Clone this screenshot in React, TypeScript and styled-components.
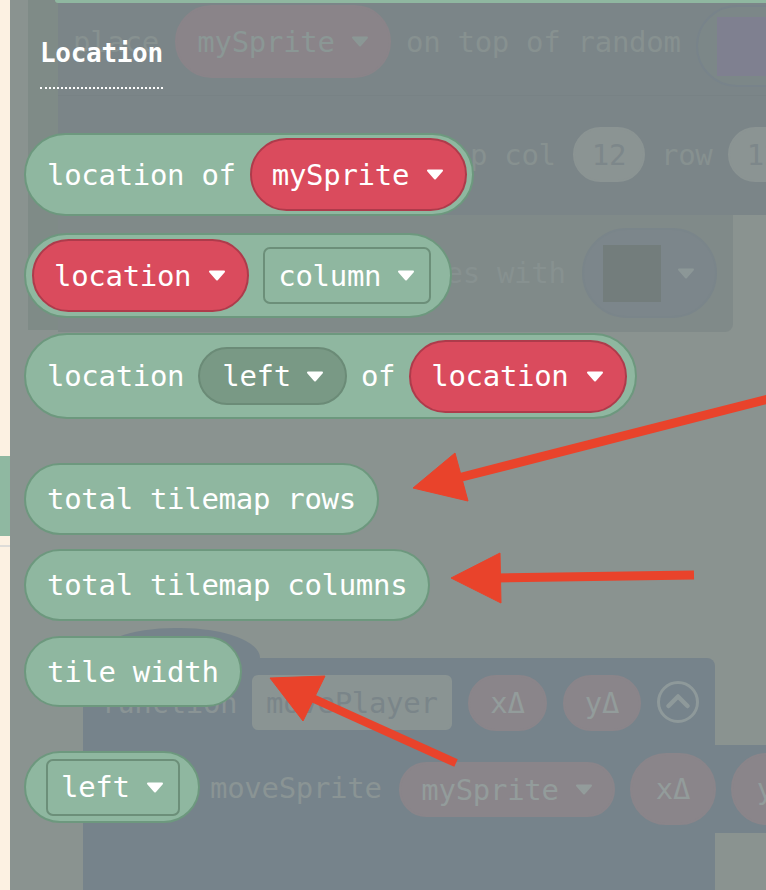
import React from 'react';
import styled, { createGlobalStyle, css } from 'styled-components';

const GlobalStyle = createGlobalStyle`
  html, body {
    margin: 0;
    padding: 0;
    background: #8a9390;
  }
  body {
    font-family: 'DejaVu Sans Mono', 'Liberation Mono', monospace;
  }
`;

const Page = styled.div`
  position: relative;
  display: flex;
  width: 766px;
  height: 890px;
  overflow: hidden;
`;

const Sidebar = styled.div`
  width: 10px;
  flex-shrink: 0;
  display: flex;
  flex-direction: column;
  padding-top: 456px;
  background: #fcf1e2;
`;

const SideTab = styled.div`
  height: 80px;
  background: #8fb8a1;
`;

const SideRule = styled.div`
  margin-top: 9px;
  height: 2px;
  background: #dedcd8;
`;

const Workspace = styled.div`
  position: relative;
  flex: 1;
  background: #8a9390;
`;

/* dimmed workspace canvas (page coordinates, workspace starts at x=10) */

type Spot = { $x: number; $y: number };
type Box = Spot & { $w: number; $h: number };

const placed = css<Box>`
  position: absolute;
  left: ${(p) => p.$x - 10}px;
  top: ${(p) => p.$y}px;
  width: ${(p) => p.$w}px;
  height: ${(p) => p.$h}px;
`;

const StackBody = styled.div<Box & { $tone?: string; $radius?: string }>`
  ${placed}
  box-sizing: border-box;
  background: ${(p) => p.$tone ?? '#7b8588'};
  border-radius: ${(p) => p.$radius ?? '0'};
`;

const GhostText = styled.span<Spot & { $ink?: string }>`
  position: absolute;
  left: ${(p) => p.$x - 10}px;
  top: ${(p) => p.$y}px;
  font-size: 29px;
  line-height: 36px;
  letter-spacing: -0.3px;
  color: ${(p) => p.$ink ?? '#879190'};
  white-space: nowrap;
`;

const GhostPill = styled.div<Box & { $fill: string; $ink: string; $radius?: string; $line?: string }>`
  ${placed}
  box-sizing: border-box;
  display: flex;
  align-items: center;
  justify-content: center;
  gap: 16px;
  background: ${(p) => p.$fill};
  border: 2px solid ${(p) => p.$line ?? p.$fill};
  border-radius: ${(p) => p.$radius ?? '999px'};
  color: ${(p) => p.$ink};
  font-size: 29px;
  letter-spacing: -0.3px;
  white-space: nowrap;
`;

const NameField = styled(GhostPill)`
  justify-content: flex-start;
  padding-left: 12px;
  overflow: hidden;
`;

const ImageField = styled(GhostPill)`
  justify-content: flex-start;
  padding-left: 19px;
  gap: 16px;
`;

const Swatch = styled.div<{ $w: number; $h: number; $tone: string }>`
  width: ${(p) => p.$w}px;
  height: ${(p) => p.$h}px;
  background: ${(p) => p.$tone};
`;

const Toggle = styled.svg<Spot>`
  position: absolute;
  left: ${(p) => p.$x - 10}px;
  top: ${(p) => p.$y}px;
`;

/* flyout */

const Flyout = styled.div`
  position: absolute;
  inset: 0;
  display: flex;
  flex-direction: column;
  align-items: flex-start;
  padding-left: 14px;
`;

const FlyoutEdge = styled.div`
  align-self: stretch;
  height: 3px;
  margin-left: 31px;
  background: #8fb7a0;
  border-bottom-left-radius: 3px;
`;

const Heading = styled.div`
  margin: 35px 0 0 16px;
  padding-bottom: 19px;
  border-bottom: 2px dotted #ffffff;
  color: #ffffff;
  font-size: 26px;
  font-weight: bold;
  line-height: 30px;
  letter-spacing: -0.3px;
`;

const Block = styled.div<{ $h: number; $mt: number; $pl: number; $pr: number }>`
  box-sizing: border-box;
  display: flex;
  align-items: center;
  gap: 14px;
  height: ${(p) => p.$h}px;
  margin-top: ${(p) => p.$mt}px;
  padding: 0 ${(p) => p.$pr}px 0 ${(p) => p.$pl}px;
  background: #8fb7a0;
  border: 2px solid #6d987e;
  border-radius: ${(p) => p.$h / 2}px;
  color: #ffffff;
  font-size: 29px;
  letter-spacing: -0.3px;
  white-space: nowrap;
`;

const kinds = {
  sprite: { fill: '#da4b5d', line: '#ae3b4b', radius: '999px', h: 73, pl: 20, pr: 21, gap: 17 },
  shadow: { fill: '#799985', line: '#6b8b77', radius: '999px', h: 58, pl: 22, pr: 21, gap: 15 },
  box: { fill: '#8fb7a0', line: '#6c8f79', radius: '7px', h: 57, pl: 13, pr: 14, gap: 16 },
};

type Kind = keyof typeof kinds;

const Dropdown = styled.div<{ $kind: Kind }>`
  box-sizing: border-box;
  display: flex;
  align-items: center;
  gap: ${(p) => kinds[p.$kind].gap}px;
  height: ${(p) => kinds[p.$kind].h}px;
  padding: 0 ${(p) => kinds[p.$kind].pr}px 0 ${(p) => kinds[p.$kind].pl}px;
  background: ${(p) => kinds[p.$kind].fill};
  border: 2px solid ${(p) => kinds[p.$kind].line};
  border-radius: ${(p) => kinds[p.$kind].radius};
`;

const Arrows = styled.svg`
  position: absolute;
  left: 0;
  top: 0;
  pointer-events: none;
`;

const Caret: React.FC<{ color?: string }> = ({ color = '#ffffff' }) => (
  <svg width="18" height="11" viewBox="0 0 18 11">
    <path d="M2 1.5h14L9 9.5z" fill={color} stroke={color} strokeWidth="2" strokeLinejoin="round" />
  </svg>
);

const dimRed = '#8a858a';
const dimInk = '#939c9b';

const App: React.FC = () => {
  return (
    <>
      <GlobalStyle />
      <Page>
        <Sidebar>
          <SideTab />
          <SideRule />
        </Sidebar>
        <Workspace>
          <StackBody $x={28} $y={0} $w={30} $h={330} $tone="#7f8b87" />
          <StackBody $x={58} $y={3} $w={708} $h={212} />
          <StackBody $x={58} $y={95} $w={708} $h={1} $tone="#788285" />
          <StackBody $x={58} $y={215} $w={675} $h={117} $tone="#808a89" $radius="0 0 8px 0" />

          <GhostText $x={73} $y={24}>place</GhostText>
          <GhostPill $x={175} $y={5} $w={216} $h={73} $fill="#8a8489" $ink="#8b9795">
            mySprite <Caret color="#8b9795" />
          </GhostPill>
          <GhostText $x={406} $y={24}>on top of random</GhostText>
          <ImageField $x={696} $y={5} $w={110} $h={82} $fill="#7c8788" $ink="#8b9795" $line="#78838a">
            <Swatch $w={57} $h={59} $tone="#7f8090" />
          </ImageField>

          <GhostText $x={367} $y={137}>tilemap col</GhostText>
          <GhostPill $x={573} $y={127} $w={72} $h={55} $fill="#8b9493" $ink="#7d878a">12</GhostPill>
          <GhostText $x={661} $y={137}>row</GhostText>
          <GhostPill $x={728} $y={127} $w={72} $h={55} $fill="#8b9493" $ink="#7d878a">12</GhostPill>

          <GhostText $x={394} $y={255}>tiles with</GhostText>
          <ImageField $x={582} $y={228} $w={135} $h={90} $fill="#7c868b" $ink="#8c9797" $line="#7a858a">
            <Swatch $w={58} $h={57} $tone="#737d7c" />
            <Caret color="#8c9797" />
          </ImageField>

          <StackBody $x={95} $y={628} $w={165} $h={60} $tone="#76838b" $radius="80px 80px 0 0 / 30px 30px 0 0" />
          <StackBody $x={83} $y={658} $w={632} $h={232} $tone="#76838b" $radius="0 8px 0 0" />
          <StackBody $x={715} $y={745} $w={51} $h={88} $tone="#76838b" />

          <GhostText $x={100} $y={685} $ink="#8a9495">function</GhostText>
          <NameField $x={252} $y={675} $w={200} $h={55} $fill="#8a9493" $ink="#7a8589" $radius="6px">
            movePlayer
          </NameField>
          <GhostPill $x={468} $y={675} $w={79} $h={56} $fill={dimRed} $ink={dimInk}>xΔ</GhostPill>
          <GhostPill $x={563} $y={675} $w={78} $h={56} $fill={dimRed} $ink={dimInk}>yΔ</GhostPill>
          <Toggle $x={656} $y={680} width="44" height="44" viewBox="0 0 44 44">
            <circle cx="22" cy="22" r="19.5" fill="none" stroke="#8e999a" strokeWidth="3" />
            <path d="M12.5 26l9.5-9.5 9.5 9.5" fill="none" stroke="#8e999a" strokeWidth="4.5" strokeLinecap="round" strokeLinejoin="round" />
          </Toggle>

          <GhostText $x={210} $y={770} $ink="#8a9494">moveSprite</GhostText>
          <GhostPill $x={399} $y={762} $w={216} $h={55} $fill={dimRed} $ink={dimInk}>
            mySprite <Caret color={dimInk} />
          </GhostPill>
          <GhostPill $x={630} $y={753} $w={86} $h={72} $fill={dimRed} $ink={dimInk}>xΔ</GhostPill>
          <GhostPill $x={731} $y={753} $w={86} $h={72} $fill={dimRed} $ink={dimInk}>yΔ</GhostPill>

          <Flyout>
            <FlyoutEdge />
            <Heading>Location</Heading>

            <Block $h={83} $mt={44} $pl={21} $pr={5}>
              <span>location of</span>
              <Dropdown $kind="sprite">
                <span>mySprite</span>
                <Caret />
              </Dropdown>
            </Block>

            <Block $h={85} $mt={17} $pl={6} $pr={19}>
              <Dropdown $kind="sprite">
                <span>location</span>
                <Caret />
              </Dropdown>
              <Dropdown $kind="box">
                <span>column</span>
                <Caret />
              </Dropdown>
            </Block>

            <Block $h={86} $mt={15} $pl={21} $pr={8}>
              <span>location</span>
              <Dropdown $kind="shadow">
                <span>left</span>
                <Caret />
              </Dropdown>
              <span>of</span>
              <Dropdown $kind="sprite">
                <span>location</span>
                <Caret />
              </Dropdown>
            </Block>

            <Block $h={72} $mt={44} $pl={21} $pr={21}>
              <span>total tilemap rows</span>
            </Block>

            <Block $h={72} $mt={14} $pl={21} $pr={21}>
              <span>total tilemap columns</span>
            </Block>

            <Block $h={71} $mt={15} $pl={21} $pr={21}>
              <span>tile width</span>
            </Block>

            <Block $h={72} $mt={44} $pl={20} $pr={18}>
              <Dropdown $kind="box">
                <span>left</span>
                <Caret />
              </Dropdown>
            </Block>
          </Flyout>
        </Workspace>

        <Arrows width="766" height="890" viewBox="0 0 766 890">
          <g fill="#e9432b" stroke="#e9432b" strokeLinejoin="round">
            <line x1="458" y1="478" x2="780" y2="396" strokeWidth="9" />
            <polygon points="413,488 455,453 468,501" strokeWidth="1" />
            <line x1="496" y1="578" x2="694" y2="575" strokeWidth="9" />
            <polygon points="451,578 500,553 501,603" strokeWidth="1" />
            <line x1="310" y1="697" x2="456" y2="763" strokeWidth="8.5" />
            <polygon points="270,678 325,676 303,721" strokeWidth="1" />
          </g>
        </Arrows>
      </Page>
    </>
  );
};

export default App;
